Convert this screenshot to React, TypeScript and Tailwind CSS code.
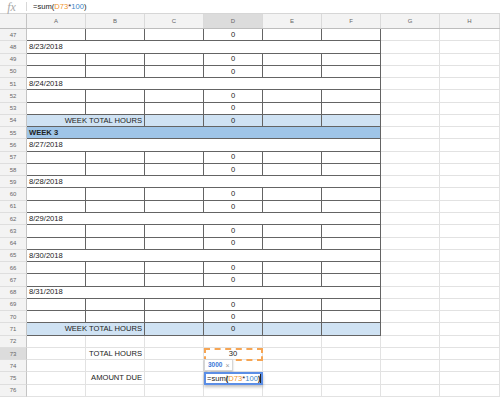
import React from 'react';

type RowKind = 'data' | 'date' | 'total' | 'week' | 'blank' | 'label';
type Row = { n: number; kind: RowKind; text?: string; d?: string };

const rows: Row[] = [
  { n: 47, kind: 'data' },
  { n: 48, kind: 'date', text: '8/23/2018' },
  { n: 49, kind: 'data' },
  { n: 50, kind: 'data' },
  { n: 51, kind: 'date', text: '8/24/2018' },
  { n: 52, kind: 'data' },
  { n: 53, kind: 'data' },
  { n: 54, kind: 'total' },
  { n: 55, kind: 'week', text: 'WEEK 3' },
  { n: 56, kind: 'date', text: '8/27/2018' },
  { n: 57, kind: 'data' },
  { n: 58, kind: 'data' },
  { n: 59, kind: 'date', text: '8/28/2018' },
  { n: 60, kind: 'data' },
  { n: 61, kind: 'data' },
  { n: 62, kind: 'date', text: '8/29/2018' },
  { n: 63, kind: 'data' },
  { n: 64, kind: 'data' },
  { n: 65, kind: 'date', text: '8/30/2018' },
  { n: 66, kind: 'data' },
  { n: 67, kind: 'data' },
  { n: 68, kind: 'date', text: '8/31/2018' },
  { n: 69, kind: 'data' },
  { n: 70, kind: 'data' },
  { n: 71, kind: 'total' },
  { n: 72, kind: 'blank' },
  { n: 73, kind: 'label', text: 'TOTAL HOURS', d: '30' },
  { n: 74, kind: 'blank' },
  { n: 75, kind: 'label', text: 'AMOUNT DUE' },
  { n: 76, kind: 'blank' },
];

const DARK = 'border-[#646464]';
const LIGHT = 'border-[#e2e2e2]';

function Cell({
  w,
  dark,
  className = '',
  children,
}: {
  w: string;
  dark?: boolean;
  className?: string;
  children?: React.ReactNode;
}) {
  return (
    <div
      className={`${w} shrink-0 h-full border-r border-b ${dark ? DARK : LIGHT} flex items-center overflow-hidden whitespace-nowrap ${className}`}
    >
      {children}
    </div>
  );
}

function RowHeader({ n }: { n: number }) {
  const active = n === 73;
  return (
    <div
      className={`w-[27px] shrink-0 h-full border-r border-r-[#c4c4c4] border-b border-b-[#dedede] ${active ? 'bg-[#dcdcdc]' : 'bg-[#f3f3f3]'} flex items-center justify-center text-[6px] text-[#666]`}
    >
      {n}
    </div>
  );
}

function Tail() {
  return (
    <>
      <Cell w="w-[59px]" />
      <Cell w="w-[60px]" />
    </>
  );
}

function SheetRow({ r }: { r: Row }) {
  let content: React.ReactNode = null;
  if (r.kind === 'data') {
    content = (
      <>
        <Cell w="w-[59px]" dark />
        <Cell w="w-[59px]" dark />
        <Cell w="w-[59px]" dark />
        <Cell w="w-[59px]" dark className="justify-center">0</Cell>
        <Cell w="w-[59px]" dark />
        <Cell w="w-[59px]" dark />
      </>
    );
  } else if (r.kind === 'date') {
    content = (
      <Cell w="w-[354px]" dark className="pl-[2px]">
        {r.text}
      </Cell>
    );
  } else if (r.kind === 'week') {
    content = (
      <Cell w="w-[354px]" dark className="pl-[2px] font-bold bg-[#9fc5e8]">
        {r.text}
      </Cell>
    );
  } else if (r.kind === 'total') {
    content = (
      <>
        <Cell w="w-[118px]" dark className="justify-end pr-[2px] bg-[#cfe2f3]">
          WEEK TOTAL HOURS
        </Cell>
        <Cell w="w-[59px]" dark className="bg-[#cfe2f3]" />
        <Cell w="w-[59px]" dark className="justify-center bg-[#cfe2f3]">0</Cell>
        <Cell w="w-[59px]" dark className="bg-[#cfe2f3]" />
        <Cell w="w-[59px]" dark className="bg-[#cfe2f3]" />
      </>
    );
  } else if (r.kind === 'label') {
    content = (
      <>
        <Cell w="w-[59px]" />
        <Cell w="w-[59px]" className="justify-end pr-[2px]">
          {r.text}
        </Cell>
        <Cell w="w-[59px]" />
        <Cell w="w-[59px]" className="justify-center">{r.d}</Cell>
        <Cell w="w-[59px]" />
        <Cell w="w-[59px]" />
      </>
    );
  } else {
    content = (
      <>
        <Cell w="w-[59px]" />
        <Cell w="w-[59px]" />
        <Cell w="w-[59px]" />
        <Cell w="w-[59px]" />
        <Cell w="w-[59px]" />
        <Cell w="w-[59px]" />
      </>
    );
  }
  return (
    <div className="flex h-[12.28px] text-[7.6px] leading-none text-[#222]">
      <RowHeader n={r.n} />
      {content}
      <Tail />
    </div>
  );
}

export default function App() {
  const cols = ['A', 'B', 'C', 'D', 'E', 'F', 'G', 'H'];
  return (
    <div className="relative w-[500px] h-[398px] overflow-hidden bg-white font-['Liberation_Sans',Arial,sans-serif]">
      {/* formula bar */}
      <div className="flex items-center h-[14px] border-b border-[#d6d6d6] bg-white">
        <div className="w-[26px] h-full flex items-center justify-center font-['Liberation_Serif',serif] italic text-[12px] leading-none text-[#a8a8a8] pr-[3px]">
          fx
        </div>
        <div className="w-px h-[9px] bg-[#d8d8d8]" />
        <div className="pl-[6px] text-[7.6px] leading-none text-[#222]">
          <span>=sum(</span>
          <span className="text-[#f0932b]">D73</span>
          <span>*</span>
          <span className="text-[#3d85c6]">100</span>
          <span>)</span>
        </div>
      </div>
      {/* column header */}
      <div className="flex h-[15px] bg-[#f3f3f3] border-b border-[#bdbdbd] text-[6px] text-[#666]">
        <div className="w-[27px] shrink-0 h-full border-r border-[#c4c4c4]" />
        {cols.map((c) => (
          <div
            key={c}
            className={`${c === 'H' ? 'w-[60px]' : 'w-[59px]'} shrink-0 h-full border-r border-[#dadada] flex items-center justify-center ${c === 'D' ? 'bg-[#dcdcdc]' : ''}`}
          >
            {c}
          </div>
        ))}
      </div>
      {/* rows */}
      <div className="flex flex-col">
        {rows.map((r) => (
          <SheetRow key={r.n} r={r} />
        ))}
      </div>

      {/* copy-range dashed outline on D73 */}
      <div className="absolute left-[204px] top-[348px] w-[59px] h-[13px] border-2 border-dashed border-[#f6a553]" />

      {/* result tooltip */}
      <div className="absolute left-[204px] top-[359px] w-[29px] h-[12px] bg-white border border-[#d6d6d6] shadow-[0_1px_2px_rgba(0,0,0,0.2)] flex items-center pl-[3px] gap-[3px] text-[6.5px] leading-none">
        <span className="font-bold text-[#3c78d8]">3000</span>
        <span className="text-[#999] text-[7px]">×</span>
      </div>
      <div className="absolute left-[206px] top-[370px] w-0 h-0 border-l-[3px] border-l-transparent border-r-[3px] border-r-transparent border-t-[3px] border-t-[#d6d6d6]" />

      {/* in-cell editor on D75 */}
      <div className="absolute left-[204px] top-[372px] w-[59px] h-[13px] bg-white border-2 border-[#5b8ee6] shadow-[0_2px_3px_rgba(0,0,0,0.25)] flex items-center pl-px text-[7.6px] leading-none text-[#222]">
        <span>=sum</span>
        <span className="font-bold bg-[#dedede]">(</span>
        <span className="text-[#f0932b]">D73</span>
        <span>*</span>
        <span className="text-[#3d85c6]">100</span>
        <span className="font-bold bg-[#dedede]">)</span>
        <span className="w-px h-[9px] bg-[#222]" />
      </div>
    </div>
  );
}
